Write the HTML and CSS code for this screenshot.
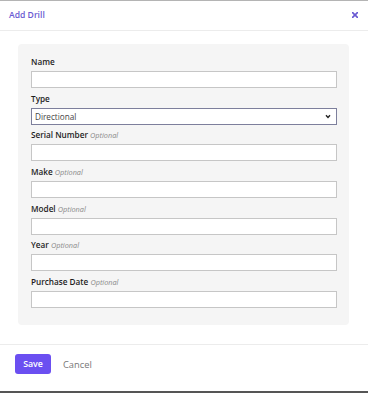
FILE: index.html
```html
<!DOCTYPE html>
<html>
<head>
<meta charset="utf-8">
<link rel="stylesheet" href="styles.css">
</head>
<body>
<div class="modal">
  <div class="modal-header">
    <span class="title">Add Drill</span>
    <svg class="close" width="6" height="6" viewBox="0 0 6 6"><path d="M0.6 0.6L5.4 5.4M5.4 0.6L0.6 5.4" stroke="#6a5ad2" stroke-width="1.6" stroke-linecap="round"/></svg>
  </div>
  <div class="modal-body">
    <div class="panel">
      <div class="field">
        <label class="label">Name</label>
        <div class="input"></div>
      </div>
      <div class="field">
        <label class="label">Type</label>
        <div class="select">
          <span>Directional</span>
          <svg width="6" height="5" viewBox="0 0 6 5"><path d="M1 1.2L3 3.4L5 1.2" fill="none" stroke="#222" stroke-width="1.4"/></svg>
        </div>
      </div>
      <div class="field">
        <label class="label">Serial Number <em class="opt">Optional</em></label>
        <div class="input"></div>
      </div>
      <div class="field">
        <label class="label">Make <em class="opt">Optional</em></label>
        <div class="input"></div>
      </div>
      <div class="field">
        <label class="label">Model <em class="opt">Optional</em></label>
        <div class="input"></div>
      </div>
      <div class="field">
        <label class="label">Year <em class="opt">Optional</em></label>
        <div class="input"></div>
      </div>
      <div class="field">
        <label class="label">Purchase Date <em class="opt">Optional</em></label>
        <div class="input"></div>
      </div>
    </div>
  </div>
  <div class="modal-footer">
    <button class="btn-save">Save</button>
    <span class="btn-cancel">Cancel</span>
  </div>
</div>
</body>
</html>
```
FILE: styles.css
```css
html, body {
  margin: 0;
  padding: 0;
  background: #ffffff;
}
body {
  font-family: "Open Sans", "DejaVu Sans", sans-serif;
  color: #222;
}
.modal {
  width: 368px;
  height: 393px;
  box-sizing: border-box;
  border-top: 1px solid #b4b4b4;
  border-bottom: 2px solid #555;
  display: flex;
  flex-direction: column;
}
.modal-header {
  height: 30px;
  box-sizing: border-box;
  border-bottom: 1px solid #ececec;
  display: flex;
  align-items: center;
  justify-content: space-between;
  padding: 0 10px 1px 9px;
}
.title {
  font-size: 8.6px;
  font-weight: 600;
  color: #6a5ad2;
}
.close {
  display: block;
}
.modal-body {
  padding: 13px 19px 0 18px;
}
.panel {
  background: #f5f5f5;
  border-radius: 4px;
  padding: 12px 12px 17px 13px;
  height: 281px;
  box-sizing: border-box;
  display: flex;
  flex-direction: column;
  gap: 4.67px;
}
.field {
  display: flex;
  flex-direction: column;
}
.label {
  font-size: 8.2px;
  font-weight: 600;
  line-height: 12px;
  height: 12px;
  margin-bottom: 3px;
  color: #1e1e1e;
}
.opt {
  font-size: 7.3px;
  font-weight: 400;
  font-style: italic;
  color: #8a8a8a;
}
.input {
  height: 17px;
  box-sizing: border-box;
  background: #fff;
  border: 1px solid #c6c6c6;
}
.select {
  height: 17px;
  box-sizing: border-box;
  background: #fff;
  border: 1px solid #7d7f9c;
  display: flex;
  align-items: center;
  justify-content: space-between;
  padding: 0 5px 0 3px;
  font-size: 8.2px;
  color: #444;
}
.select svg {
  display: block;
}
.modal-footer {
  margin-top: 19px;
  border-top: 1px solid #ececec;
  padding: 9px 0 0 15px;
  display: flex;
  align-items: center;
  gap: 12px;
}
.btn-save {
  width: 36px;
  height: 20px;
  border: none;
  border-radius: 3px;
  background: #6b4ff1;
  color: #fff;
  font-family: "Open Sans", "DejaVu Sans", sans-serif;
  font-size: 8.8px;
  font-weight: 600;
  padding: 0;
}
.btn-cancel {
  font-size: 9.3px;
  color: #777;
}
```
